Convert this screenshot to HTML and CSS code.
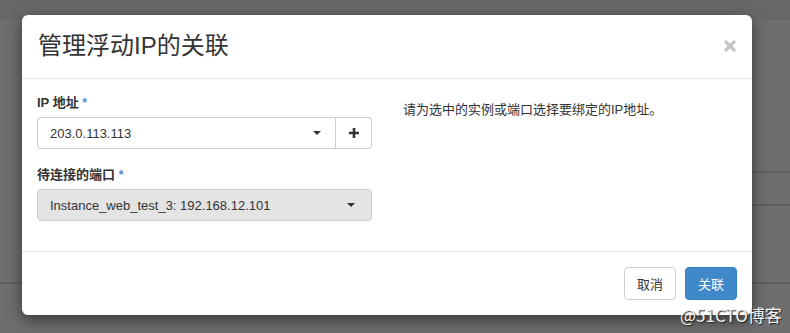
FILE: index.html
```html
<!DOCTYPE html>
<html lang="zh-CN">
<head>
  <meta charset="UTF-8" />
  <title>管理浮动IP的关联</title>
  <link rel="stylesheet" href="styles.css">
</head>
<body>
  <!-- page behind the backdrop -->
  <div class="page">
    <div class="page-top"></div>
    <div class="page-row row-a"></div>
    <div class="page-row row-b"></div>
    <div class="page-row row-c"></div>
  </div>

  <div class="modal">
    <div class="modal-header">
      <h3 class="modal-title">管理浮动IP的关联</h3>
      <span class="close">
        <svg width="12" height="12" viewBox="0 0 12 12"><path d="M2 2L10 10M10 2L2 10" stroke="#c4c4c4" stroke-width="3.2" stroke-linecap="round"/></svg>
      </span>
    </div>

    <div class="modal-body">
      <div class="form-col">
        <div class="form-group">
          <label>IP 地址 <span class="req">*</span></label>
          <div class="input-group">
            <div class="select">
              <span>203.0.113.113</span>
              <span class="caret"></span>
            </div>
            <div class="addon">
              <svg width="12" height="12" viewBox="0 0 12 12"><path d="M6 1V11M1 6H11" stroke="#333" stroke-width="2.6"/></svg>
            </div>
          </div>
        </div>
        <div class="form-group">
          <label>待连接的端口 <span class="req">*</span></label>
          <div class="select disabled">
            <span>Instance_web_test_3: 192.168.12.101</span>
            <span class="caret"></span>
          </div>
        </div>
      </div>
      <p class="help">请为选中的实例或端口选择要绑定的IP地址。</p>
    </div>

    <div class="modal-footer">
      <button class="btn">取消</button>
      <button class="btn btn-primary">关联</button>
    </div>
  </div>

  <div class="watermark">@51CTO博客</div>
</body>
</html>
```

FILE: styles.css
```css
* {
  box-sizing: border-box;
}

body {
  margin: 0;
  width: 790px;
  height: 333px;
  overflow: hidden;
  background: #6e6e6e;
  font-family: 'Liberation Sans', 'Noto Sans CJK SC', sans-serif;
  font-size: 13px;
  color: #333;
  position: relative;
}

/* Background page */
.page-top {
  height: 20px;
  background: #686868;
}

.page-row {
  border-bottom: 2px solid #5f5f5f;
}

.row-a {
  height: 153px;
  margin-left: 40px;
}

.row-b {
  height: 33px;
  margin-left: 40px;
}

.row-c {
  height: 78px;
}

/* Modal */
.modal {
  position: absolute;
  left: 22px;
  top: 15px;
  width: 730px;
  background: #fff;
  border-radius: 6px;
  box-shadow: 0 5px 15px rgba(0, 0, 0, 0.5);
}

.modal-header {
  display: flex;
  justify-content: space-between;
  align-items: flex-start;
  padding: 14px 16px;
  border-bottom: 1px solid #e5e5e5;
  height: 64px;
}

.modal-title {
  margin: 0;
  font-family: 'Liberation Sans', 'Noto Sans CJK SC', sans-serif;
  font-size: 24px;
  font-weight: 400;
  line-height: 34px;
  color: #333;
}

.close {
  margin-top: 11px;
  display: flex;
}

.modal-body {
  display: grid;
  grid-template-columns: 335px 1fr;
  gap: 31px;
  padding: 15px 15px 13px;
}

.form-group {
  margin-bottom: 17px;
}

label {
  display: block;
  font-weight: 700;
  font-size: 13px;
  line-height: 18px;
  margin-bottom: 5px;
}

.req {
  color: #4a8ccc;
  font-size: 12px;
  vertical-align: top;
}

.input-group {
  display: flex;
}

.select {
  flex: 1;
  display: flex;
  align-items: center;
  justify-content: space-between;
  height: 32px;
  padding: 0 16px 0 12px;
  border: 1px solid #ccc;
  border-radius: 4px;
  background: #fff;
  font-size: 13px;
  color: #333;
}

.input-group .select {
  border-radius: 4px 0 0 4px;
  padding-right: 14px;
}

.select.disabled {
  background: #e4e4e4;
}

.caret {
  width: 0;
  height: 0;
  border-left: 4px solid transparent;
  border-right: 4px solid transparent;
  border-top: 4px solid #333;
}

.addon {
  width: 36px;
  height: 32px;
  display: flex;
  align-items: center;
  justify-content: center;
  border: 1px solid #ccc;
  border-left: none;
  border-radius: 0 4px 4px 0;
  background: #fff;
}

.help {
  margin: 6px 0 0;
  line-height: 20px;
  font-size: 13px;
  color: #333;
}

.modal-footer {
  display: flex;
  justify-content: flex-end;
  gap: 9px;
  padding: 15px;
  border-top: 1px solid #e5e5e5;
}

.btn {
  width: 52px;
  height: 33px;
  border: 1px solid #ccc;
  border-radius: 4px;
  background: #fff;
  color: #333;
  font-family: 'Liberation Sans', 'Noto Sans CJK SC', sans-serif;
  font-size: 13px;
  padding: 0;
}

.btn-primary {
  background: #3f88c9;
  border-color: #357ebd;
  color: #fff;
}

.watermark {
  position: absolute;
  left: 680px;
  top: 304px;
  font-family: 'Noto Sans CJK SC', sans-serif;
  font-size: 17px;
  line-height: 22px;
  color: #f4f4f4;
  text-shadow: 1px 1px 1px #222;
}
```
